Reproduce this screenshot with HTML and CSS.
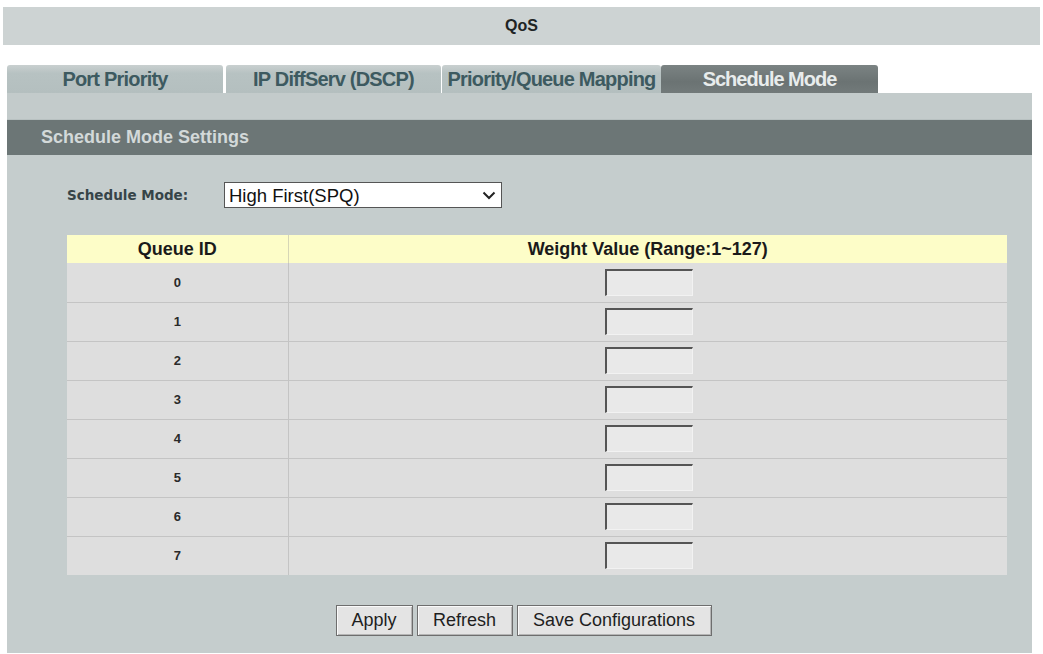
FILE: index.html
```html
<!DOCTYPE html>
<html lang="en">
<head>
  <meta charset="UTF-8" />
  <title>QoS</title>
  <link rel="stylesheet" href="styles.css">
</head>
<body>

  <div class="title-bar">QoS</div>

  <div class="tabs">
    <div class="tab">Port Priority</div>
    <div class="tab">IP DiffServ (DSCP)</div>
    <div class="tab">Priority/Queue Mapping</div>
    <div class="tab active">Schedule Mode</div>
  </div>

  <div class="panel">
    <div class="panel-strip"></div>
    <div class="panel-head">Schedule Mode Settings</div>

    <div class="panel-body">
      <div class="mode-row">
        <label class="mode-label" for="mode">Schedule Mode:</label>
        <span class="select-wrap">
          <select id="mode" class="mode-select">
            <option>High First(SPQ)</option>
            <option>WRR</option>
          </select>
          <svg class="chevron" viewBox="0 0 14 9"><path d="M1.5 1.5 7 7l5.5-5.5" /></svg>
        </span>
      </div>

      <table class="queues">
        <thead>
          <tr>
            <th class="col-id">Queue ID</th>
            <th>Weight Value (Range:1~127)</th>
          </tr>
        </thead>
        <tbody>
          <tr><td class="col-id">0</td><td><input type="text" class="weight"></td></tr>
          <tr><td class="col-id">1</td><td><input type="text" class="weight"></td></tr>
          <tr><td class="col-id">2</td><td><input type="text" class="weight"></td></tr>
          <tr><td class="col-id">3</td><td><input type="text" class="weight"></td></tr>
          <tr><td class="col-id">4</td><td><input type="text" class="weight"></td></tr>
          <tr><td class="col-id">5</td><td><input type="text" class="weight"></td></tr>
          <tr><td class="col-id">6</td><td><input type="text" class="weight"></td></tr>
          <tr><td class="col-id">7</td><td><input type="text" class="weight"></td></tr>
        </tbody>
      </table>

      <div class="actions">
        <button class="btn btn-apply">Apply</button>
        <button class="btn btn-refresh">Refresh</button>
        <button class="btn btn-save">Save Configurations</button>
      </div>
    </div>
  </div>

</body>
</html>
```

FILE: styles.css
```css
* {
  box-sizing: border-box;
}

body {
  margin: 0;
  padding: 7px 3px 0 3px;
  background: #ffffff;
  font-family: 'Liberation Sans', Arial, sans-serif;
  color: #222;
  overflow: hidden;
}

.title-bar {
  height: 38px;
  line-height: 38px;
  background: #cdd3d3;
  text-align: center;
  font-weight: bold;
  font-size: 16px;
  color: #1e2424;
}

.tabs {
  display: flex;
  margin: 20px 0 0 4px;
  height: 28px;
}

.tab {
  width: 216px;
  margin-right: 3px;
  background: linear-gradient(#c9d0d0, #b7c2c2 30%, #b4bfbf);
  border-radius: 3px 3px 0 0;
  text-align: center;
  line-height: 28px;
  font-size: 20px;
  font-weight: bold;
  letter-spacing: -0.8px;
  color: #3d5a60;
}

.tab:nth-child(2) { width: 215px; margin-right: 1px; }
.tab:nth-child(3) { width: 219px; margin-right: 0; }

.tab.active {
  width: 217px;
  background: linear-gradient(#7b8383, #6b7373 60%, #727a7a);
  color: #e8ecec;
  letter-spacing: -1px;
}

.panel {
  margin-left: 4px;
  width: 1025px;
  height: 560px;
  background: #c5cdcd;
  display: flex;
  flex-direction: column;
}

.panel-strip {
  height: 27px;
  background: #c3cbcb;
  border-bottom: 1px solid #b8c1c1;
}

.panel-head {
  height: 35px;
  line-height: 34px;
  padding-left: 34px;
  background: #6c7676;
  color: #d3d9d9;
  font-size: 18px;
  font-weight: bold;
}

.panel-body {
  flex: 1;
  padding: 27px 25px 0 60px;
}

.mode-row {
  display: flex;
  align-items: center;
  height: 26px;
}

.mode-label {
  width: 157px;
  font-family: 'DejaVu Sans', Verdana, sans-serif;
  font-weight: bold;
  font-size: 13.5px;
  color: #364448;
}

.select-wrap {
  position: relative;
  display: inline-block;
}

.mode-select {
  appearance: none;
  -webkit-appearance: none;
  width: 278px;
  height: 26px;
  padding: 0 0 0 4px;
  border: 1px solid #555;
  border-radius: 0;
  background: #ffffff;
  font-family: 'Liberation Sans', Arial, sans-serif;
  font-size: 18.5px;
  color: #111;
}

.chevron {
  position: absolute;
  right: 6px;
  top: 9px;
  width: 14px;
  height: 9px;
  fill: none;
  stroke: #222;
  stroke-width: 2;
  pointer-events: none;
}

.queues {
  width: 940px;
  margin-top: 27px;
  border-collapse: collapse;
}

.queues th {
  height: 28px;
  background: #fdfdc8;
  font-size: 18px;
  font-weight: bold;
  color: #1a1a1a;
  padding: 0;
  border-left: 1px solid #d6d6b6;
}

.queues td {
  height: 39px;
  background: #dedede;
  border-bottom: 1px solid #c4c4c4;
  border-left: 1px solid #c4c4c4;
  text-align: center;
  padding: 0;
}

.queues tr:last-child td { border-bottom: none; }

.queues .col-id {
  width: 221px;
  border-left: none;
  font-size: 13px;
  font-weight: bold;
  color: #2a2a2a;
}

.queues th.col-id {
  font-size: 18px;
  color: #1a1a1a;
}

.weight {
  width: 88px;
  height: 27px;
  margin: 0 0 0 3px;
  background: #e9e9e9;
  border-style: solid;
  border-width: 2px 1px 1px 2px;
  border-color: #555 #f2f2f2 #f2f2f2 #555;
  vertical-align: middle;
}

.actions {
  display: flex;
  justify-content: center;
  gap: 4px;
  margin-top: 30px;
  padding-right: 27px;
}

.btn {
  height: 31px;
  padding: 0;
  background: #e4e4e4;
  border: 1px solid #6e6e6e;
  box-shadow: inset 1px 1px 0 #fafafa, inset -1px -1px 0 #b5b5b5;
  font-family: 'Liberation Sans', Arial, sans-serif;
  font-size: 18px;
  color: #1e1e1e;
  cursor: pointer;
}

.btn-apply { width: 77px; }
.btn-refresh { width: 96px; }
.btn-save { width: 195px; }
```
